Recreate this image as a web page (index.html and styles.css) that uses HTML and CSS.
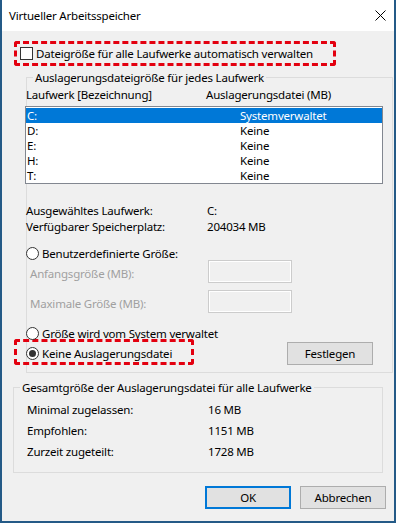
FILE: index.html
```html
<!DOCTYPE html>
<html lang="de">
<head>
<meta charset="UTF-8">
<meta name="viewport" content="width=device-width, initial-scale=1.0">
<title>Virtueller Arbeitsspeicher</title>
<link rel="stylesheet" href="styles.css">
</head>
<body>
<div class="window">
    <div class="titlebar">
        <span class="title">Virtueller Arbeitsspeicher</span>
        <svg class="close" width="11" height="11" viewBox="0 0 11 11">
            <path d="M0.5 0.5 L10.5 10.5 M10.5 0.5 L0.5 10.5" stroke="#000" stroke-width="1" fill="none"/>
        </svg>
    </div>

    <div class="content">
        <div class="mark mark-auto">
            <label class="check"><span class="box"></span>Dateigröße für alle Laufwerke automatisch verwalten</label>
        </div>

        <fieldset class="group group-drive">
            <legend>Auslagerungsdateigröße für jedes Laufwerk</legend>
            <div class="cols">
                <span>Laufwerk [Bezeichnung]</span>
                <span>Auslagerungsdatei (MB)</span>
            </div>
            <div class="listbox">
                <div class="row selected"><span>C:</span><span>Systemverwaltet</span></div>
                <div class="row"><span>D:</span><span>Keine</span></div>
                <div class="row"><span>E:</span><span>Keine</span></div>
                <div class="row"><span>H:</span><span>Keine</span></div>
                <div class="row"><span>T:</span><span>Keine</span></div>
            </div>
            <div class="info">
                <span>Ausgewähltes Laufwerk:</span><span>C:</span>
                <span>Verfügbarer Speicherplatz:</span><span>204034 MB</span>
            </div>
            <label class="radio radio-custom"><span class="dot"></span>Benutzerdefinierte Größe:</label>
            <div class="field field-first">
                <span class="field-label">Anfangsgröße (MB):</span>
                <span class="textbox"></span>
            </div>
            <div class="field field-second">
                <span class="field-label">Maximale Größe (MB):</span>
                <span class="textbox"></span>
            </div>
            <label class="radio radio-system"><span class="dot"></span>Größe wird vom System verwaltet</label>
            <div class="last-row">
                <div class="mark mark-none">
                    <label class="radio"><span class="dot checked"></span>Keine Auslagerungsdatei</label>
                </div>
                <button class="btn btn-set">Festlegen</button>
            </div>
        </fieldset>

        <fieldset class="group group-total">
            <legend>Gesamtgröße der Auslagerungsdatei für alle Laufwerke</legend>
            <div class="totals">
                <span>Minimal zugelassen:</span><span>16 MB</span>
                <span>Empfohlen:</span><span>1151 MB</span>
                <span>Zurzeit zugeteilt:</span><span>1728 MB</span>
            </div>
        </fieldset>

        <div class="actions">
            <button class="btn btn-default">OK</button>
            <button class="btn">Abbrechen</button>
        </div>
    </div>
</div>
</body>
</html>
```

FILE: styles.css
```css
body {
    margin: 0;
    padding: 0;
    font-family: "Segoe UI", "Noto Sans", sans-serif;
    font-size: 11.5px;
    letter-spacing: -0.2px;
    color: #000;
    background: #fff;
    white-space: nowrap;
}
.window {
    width: 396px;
    height: 523px;
    box-sizing: border-box;
    border: 2px solid #245a87;
    border-top: none;
    display: flex;
    flex-direction: column;
}
.titlebar {
    height: 31px;
    background: #fff;
    display: flex;
    align-items: center;
}
.title {
    padding-left: 7px;
    line-height: 15px;
}
.close {
    margin-left: auto;
    margin-right: 8px;
}
.content {
    flex: 1;
    background: #f0f0f0;
}

/* red dashed highlight */
.mark {
    box-sizing: border-box;
    border: 3px dashed #e3000f;
    border-radius: 3px;
    display: flex;
    align-items: center;
}
.mark-auto {
    margin: 10px 0 0 12px;
    width: 322px;
    height: 25px;
    padding-left: 3px;
}
.check {
    display: flex;
    align-items: center;
    line-height: 15px;
}
.box {
    width: 13px;
    height: 13px;
    box-sizing: border-box;
    border: 1px solid #333;
    background: #fff;
    margin-right: 3px;
}

/* group boxes */
.group {
    border: 1px solid #dcdcdc;
    padding: 0;
    margin: 0;
    min-inline-size: 0;
}
.group legend {
    padding: 0 2px;
    line-height: 15px;
}
.group-drive {
    margin: 4px 0 0 24px;
    width: 367px;
    box-sizing: border-box;
    padding-bottom: 7px;
}
.group-drive legend {
    margin-left: 6px;
}
.cols {
    display: grid;
    grid-template-columns: 180px auto;
    margin: 2px 0 0 -1px;
    line-height: 15px;
}
.listbox {
    margin: 4px 0 0 -2px;
    width: 358px;
    box-sizing: border-box;
    border: 1px solid #828790;
    background: #fff;
    padding-top: 1px;
}
.row {
    display: grid;
    grid-template-columns: 213px auto;
    height: 15px;
    line-height: 15px;
    padding-left: 1px;
}
.row.selected {
    background: #0078d7;
    color: #fff;
}
.info {
    display: grid;
    grid-template-columns: 181px auto;
    margin: 19px 0 0 -1px;
    line-height: 16px;
}
.radio {
    display: flex;
    align-items: center;
    height: 13px;
    line-height: 15px;
}
.group-drive > .radio {
    margin-left: -1px;
}
.radio-custom {
    margin-top: 12px;
}
.radio-system {
    margin-top: 14px;
}
.dot {
    width: 13px;
    height: 13px;
    box-sizing: border-box;
    border: 1px solid #333;
    border-radius: 50%;
    background: #fff;
    margin-right: 3px;
    position: relative;
}
.dot.checked::after {
    content: "";
    position: absolute;
    left: 2px;
    top: 2px;
    width: 7px;
    height: 7px;
    border-radius: 50%;
    background: #333;
}
.field {
    display: flex;
    align-items: center;
    height: 23px;
    color: #a0a0a0;
}
.field-second {
    margin-top: 7px;
}
.field-label {
    width: 178px;
    margin-left: 3px;
    padding-top: 3px;
    line-height: 15px;
}
.textbox {
    width: 84px;
    height: 23px;
    box-sizing: border-box;
    border: 1px solid #cccccc;
    box-shadow: inset 0 0 0 1px #fff;
    background: #f0f0f0;
}
.last-row {
    display: flex;
    align-items: flex-start;
    margin-top: -1px;
}
.mark-none {
    margin-left: -13px;
    width: 180px;
    height: 26px;
    padding: 2px 0 0 9px;
}

/* buttons */
.btn {
    font-family: inherit;
    font-size: 11.5px;
    letter-spacing: -0.2px;
    color: #000;
    width: 86px;
    height: 23px;
    box-sizing: border-box;
    background: #e1e1e1;
    border: 1px solid #adadad;
    padding: 0;
}
.btn-set {
    margin: 3px 19px 0 auto;
}
.btn-default {
    border: 2px solid #0078d7;
}

.group-total {
    margin: 7px 0 0 11px;
    width: 370px;
    box-sizing: border-box;
    padding-bottom: 10px;
}
.group-total legend {
    margin-left: 6px;
}
.totals {
    display: grid;
    grid-template-columns: 181px auto;
    margin-top: 4px;
    padding-left: 13px;
    line-height: 21px;
}
.actions {
    display: flex;
    justify-content: flex-end;
    gap: 9px;
    margin: 13px 8px 0 0;
}
```
